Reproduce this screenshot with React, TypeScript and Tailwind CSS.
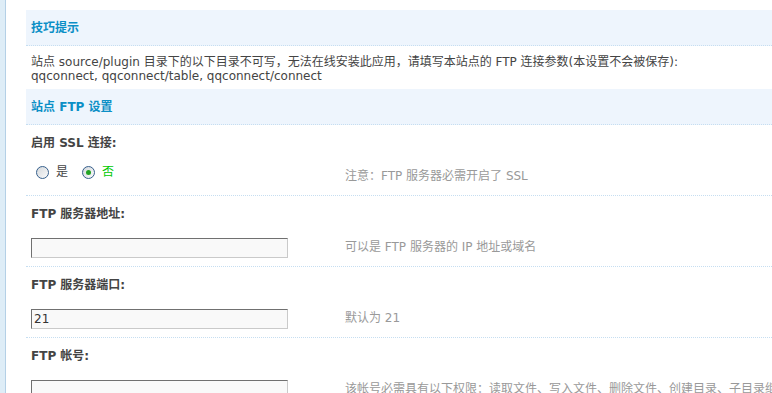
import type { ReactNode } from 'react'

function Radio({ checked, label }: { checked?: boolean; label: string }) {
  return (
    <span className="flex items-center gap-[7px]">
      <span className="flex h-[13px] w-[13px] items-center justify-center rounded-full border border-[#365f8c] bg-gradient-to-br from-[#d4d8dc] to-[#fbfbfb]">
        {checked && <span className="h-[5px] w-[5px] rounded-full bg-[#22a322]" />}
      </span>
      <span className={checked ? 'text-[#00c800]' : 'text-[#444]'}>{label}</span>
    </span>
  )
}

function FtpInput({ value = '' }: { value?: string }) {
  return (
    <input
      readOnly
      defaultValue={value}
      className="block h-[20px] w-[257px] border border-t-[#707070] border-l-[#707070] border-r-[#cacaca] border-b-[#cacaca] bg-[#f9f9f9] px-[2px] text-[12px] leading-[18px] text-[#333] outline-none"
    />
  )
}

function Setting({ label, tip, children }: { label: string; tip: string; children: ReactNode }) {
  return (
    <div className="border-b border-dotted border-[#c6def1]">
      <div className="flex h-[36px] items-center pl-[5px] font-bold text-[#444]">{label}</div>
      <div className="flex h-[34px]">
        <div className="w-[319px] shrink-0 pl-[5px] pt-[6px]">{children}</div>
        <div className="mb-[4px] self-center whitespace-nowrap text-[#999]">{tip}</div>
      </div>
    </div>
  )
}

function SectionHeader({ title }: { title: string }) {
  return (
    <div className="flex h-[36px] items-center border-b border-dotted border-[#c6def1] bg-[#eef5fd] pl-[5px] font-bold text-[#0b8fc6]">
      {title}
    </div>
  )
}

export default function App() {
  return (
    <div className="flex h-[393px] w-[772px] overflow-hidden bg-white font-['DejaVu_Sans','Noto_Sans_CJK_SC',sans-serif] text-[12px] text-[#444]">
      {/* left frame strip */}
      <div className="w-[6px] shrink-0 border-r border-[#b4d0e6] bg-[#deedf7]" />

      <div className="min-w-0 flex-1 pl-[20px] pt-[10px]">
        <div className="w-[900px]">
          <SectionHeader title="技巧提示" />
          <div className="pb-[6px] pl-[5px] pt-[9px] leading-[14px]">
            <div className="whitespace-nowrap">
              站点 source/plugin 目录下的以下目录不可写，无法在线安装此应用，请填写本站点的 FTP 连接参数(本设置不会被保存):
            </div>
            <div className="whitespace-nowrap">qqconnect, qqconnect/table, qqconnect/connect</div>
          </div>

          <SectionHeader title="站点 FTP 设置" />

          <Setting label="启用 SSL 连接:" tip="注意：FTP 服务器必需开启了 SSL">
            <div className="-mt-[4px] flex items-center gap-[14px] pl-[5px]">
              <Radio label="是" />
              <Radio checked label="否" />
            </div>
          </Setting>

          <Setting label="FTP 服务器地址:" tip="可以是 FTP 服务器的 IP 地址或域名">
            <FtpInput />
          </Setting>

          <Setting label="FTP 服务器端口:" tip="默认为 21">
            <FtpInput value="21" />
          </Setting>

          <Setting
            label="FTP 帐号:"
            tip="该帐号必需具有以下权限：读取文件、写入文件、删除文件、创建目录、子目录继承"
          >
            <FtpInput />
          </Setting>
        </div>
      </div>
    </div>
  )
}
